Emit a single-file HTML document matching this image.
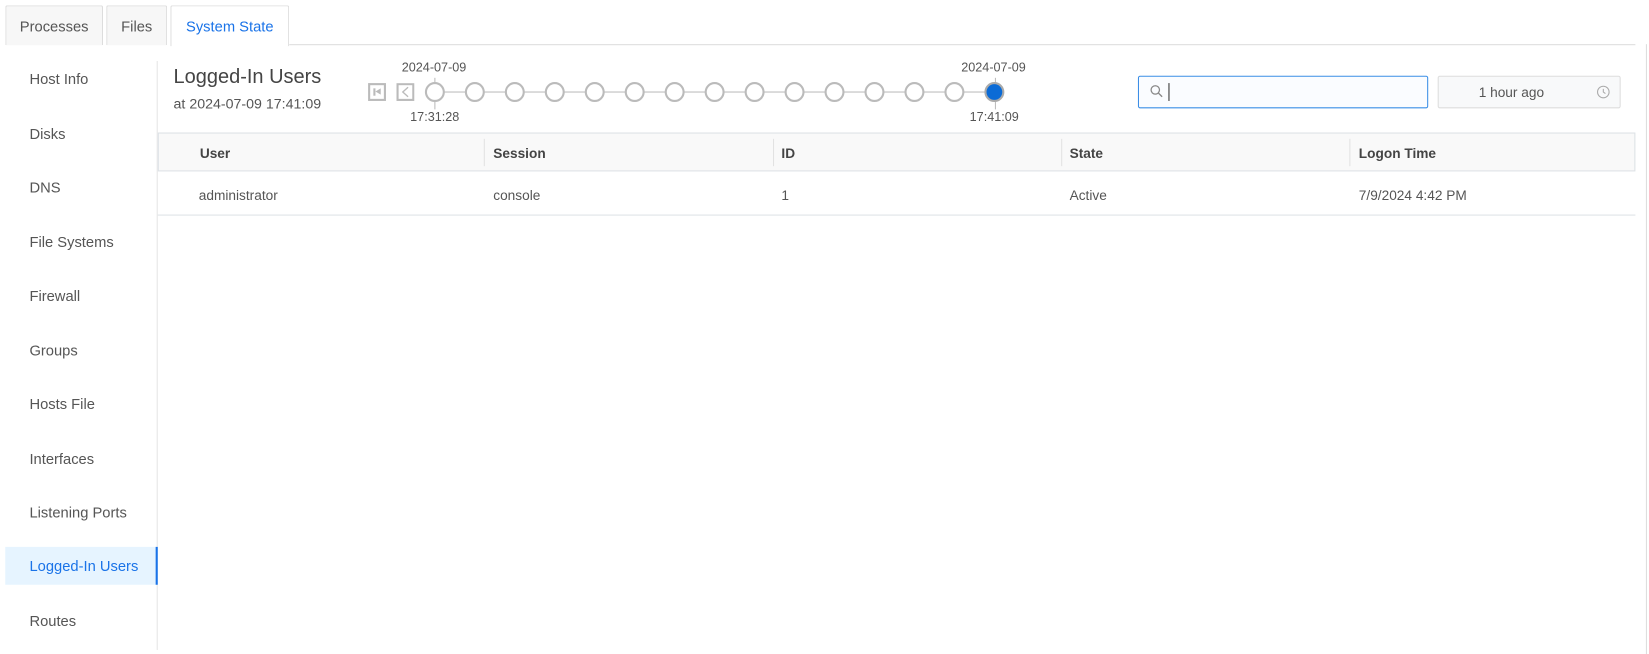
<!DOCTYPE html>
<html><head><style>
*{box-sizing:border-box;margin:0;padding:0}
body{width:1649px;height:650px;background:#fff;font-family:"Liberation Sans",sans-serif;color:#555;position:relative;overflow:hidden;font-size:13px}
#w{position:absolute;left:0;top:0;width:1568px;height:618px;transform:scale(1.0517);transform-origin:0 0}
.abs{position:absolute}
.tab{position:absolute;top:5px;height:38px;border:1px solid #ddd;border-bottom:none;background:#f7f7f7;font-size:14px;color:#555;text-align:center;line-height:38px;border-radius:2px 2px 0 0}
.side div{position:absolute;left:28px;font-size:14px;color:#555}
.col{position:absolute;font-size:13px}
.circ{position:absolute;width:19px;height:19px;border:2px solid #bbb;border-radius:50%;background:#fff;top:78px}
</style></head><body><div id="w">
<div class="tab" style="left:5px;width:93px">Processes</div>
<div class="tab" style="left:101px;width:58px">Files</div>
<div class="tab" style="left:162px;width:113px;background:#fff;color:#1a73e8;height:39px">System State</div>
<div class="abs" style="left:275px;top:42px;width:1280px;height:1px;background:#ddd"></div>
<div class="abs" style="left:1565px;top:42px;width:1px;height:580px;background:#ddd"></div>
<div class="abs" style="left:149px;top:58px;width:1px;height:560px;background:#e5e5e5"></div>
<div class="side">
<div style="top:67px">Host Info</div>
<div style="top:119px">Disks</div>
<div style="top:170px">DNS</div>
<div style="top:222px">File Systems</div>
<div style="top:273px">Firewall</div>
<div style="top:325px">Groups</div>
<div style="top:376px">Hosts File</div>
<div style="top:428px">Interfaces</div>
<div style="top:479px">Listening Ports</div>
<div class="abs" style="left:5px;top:520px;width:145px;height:36px;background:#e6f4ff;border-right:2px solid #1a73e8"></div>
<div style="top:530px;color:#1a73e8">Logged-In Users</div>
<div style="top:582px">Routes</div>
</div>
<div class="abs" style="left:165px;top:63px;font-size:19px;color:#444">Logged-In Users</div>
<div class="abs" style="left:165px;top:91px;font-size:13.5px;color:#555">at 2024-07-09 17:41:09</div>
<div class="abs" style="left:382px;top:57px;font-size:12px">2024-07-09</div>
<div class="abs" style="left:390px;top:104px;font-size:12px">17:31:28</div>
<div class="abs" style="left:914px;top:57px;font-size:12px">2024-07-09</div>
<div class="abs" style="left:922px;top:104px;font-size:12px">17:41:09</div>
<div class="abs" style="left:350px;top:79px;width:17px;height:17px;border:2px solid #bbb"><div class="abs" style="left:3px;top:3px;width:2px;height:7px;background:#bbb"></div><div class="abs" style="left:5px;top:3px;border-right:5px solid #bbb;border-top:3.5px solid transparent;border-bottom:3.5px solid transparent"></div></div>
<svg class="abs" style="left:377px;top:79px" width="17" height="17"><rect x="1" y="1" width="15" height="15" fill="none" stroke="#bbb" stroke-width="2"/><path d="M11 4L6 8.5L11 13" fill="none" stroke="#bbb" stroke-width="1.3"/></svg>
<div class="abs" style="left:413px;top:87px;width:533px;height:1px;background:#bbb"></div>
<div class="abs" style="left:413px;top:74px;width:1px;height:30px;background:#bbb"></div>
<div class="abs" style="left:946px;top:74px;width:1px;height:30px;background:#bbb"></div>
<div class="circ" style="left:404px"></div><div class="circ" style="left:442px"></div><div class="circ" style="left:480px"></div><div class="circ" style="left:518px"></div><div class="circ" style="left:556px"></div><div class="circ" style="left:594px"></div><div class="circ" style="left:632px"></div><div class="circ" style="left:670px"></div><div class="circ" style="left:708px"></div><div class="circ" style="left:746px"></div><div class="circ" style="left:784px"></div><div class="circ" style="left:822px"></div><div class="circ" style="left:860px"></div><div class="circ" style="left:898px"></div>
<div class="circ" style="left:936px;background:#0b6bd6;border-color:#aaa"></div>
<div class="abs" style="left:1082px;top:72px;width:276px;height:31px;border:1px solid #3a8ee6;border-radius:2px;background:#fafcff"></div>
<svg class="abs" style="left:1093px;top:80px" width="14" height="14"><circle cx="5.5" cy="5.5" r="4" fill="none" stroke="#888" stroke-width="1.2"/><path d="M8.5 8.5L12 12" stroke="#888" stroke-width="1.3"/></svg>
<div class="abs" style="left:1111px;top:79px;width:1px;height:17px;background:#333"></div>
<div class="abs" style="left:1367px;top:72px;width:174px;height:31px;border:1px solid #ddd;border-radius:2px;background:#f8f9fa;font-size:13px;line-height:30px;padding-left:38px;color:#555">1 hour ago</div>
<svg class="abs" style="left:1518px;top:81px" width="13" height="13"><circle cx="6.5" cy="6.5" r="5.5" fill="none" stroke="#aaa"/><path d="M6.5 3.5V6.5L8.5 8" fill="none" stroke="#aaa"/></svg>
<div class="abs" style="left:150px;top:126px;width:1405px;height:37px;background:#f9f9f9;border:1px solid #dde2e6"></div>
<div class="abs" style="left:150px;top:204px;width:1405px;height:1px;background:#dde2e6"></div>
<div class="abs" style="left:460px;top:132px;width:1px;height:26px;background:#e2e2e2"></div>
<div class="abs" style="left:735px;top:132px;width:1px;height:26px;background:#e2e2e2"></div>
<div class="abs" style="left:1009px;top:132px;width:1px;height:26px;background:#e2e2e2"></div>
<div class="abs" style="left:1283px;top:132px;width:1px;height:26px;background:#e2e2e2"></div>
<div class="col" style="left:190px;top:138px;font-weight:bold;color:#444">User</div>
<div class="col" style="left:469px;top:138px;font-weight:bold;color:#444">Session</div>
<div class="col" style="left:743px;top:138px;font-weight:bold;color:#444">ID</div>
<div class="col" style="left:1017px;top:138px;font-weight:bold;color:#444">State</div>
<div class="col" style="left:1292px;top:138px;font-weight:bold;color:#444">Logon Time</div>
<div class="col" style="left:189px;top:178px">administrator</div>
<div class="col" style="left:469px;top:178px">console</div>
<div class="col" style="left:743px;top:178px">1</div>
<div class="col" style="left:1017px;top:178px">Active</div>
<div class="col" style="left:1292px;top:178px">7/9/2024 4:42 PM</div>
</div></body></html>
